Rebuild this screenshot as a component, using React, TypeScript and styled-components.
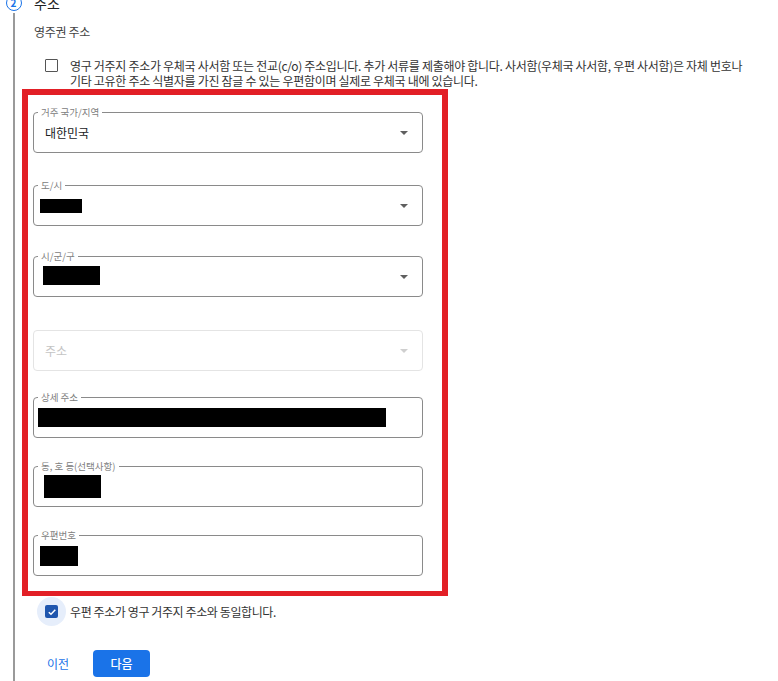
import React from 'react';
import styled, { createGlobalStyle } from 'styled-components';

const GlobalStyle = createGlobalStyle`
  html, body {
    margin: 0;
    padding: 0;
    background: #ffffff;
    overflow: hidden;
  }
  body {
    font-family: "Noto Sans CJK KR", "Noto Sans", sans-serif;
    color: #202124;
  }
`;

const Page = styled.div`
  display: flex;
  min-height: 100vh;
`;

const Rail = styled.div`
  width: 27px;
  flex: 0 0 27px;
  display: flex;
  flex-direction: column;
  align-items: center;
`;

const StepCircle = styled.div`
  width: 14px;
  height: 14px;
  margin-top: -5px;
  border: 1.5px solid #1a73e8;
  border-radius: 50%;
  display: flex;
  align-items: center;
  justify-content: center;
  color: #1a73e8;
  font-size: 10px;
  font-weight: 700;
  line-height: 1;
  background: #fff;
`;

const RailLine = styled.div`
  flex: 1;
  width: 2px;
  margin-top: 2px;
  background: #9a9a9a;
`;

const Content = styled.div`
  flex: 1;
  padding-left: 7px;
`;

const Title = styled.div`
  margin-top: -6px;
  font-size: 14px;
  line-height: 18px;
  color: #202124;
`;

const Subtitle = styled.div`
  margin-top: 12px;
  font-size: 12px;
  line-height: 16px;
  letter-spacing: -0.3px;
  color: #444;
`;

const NoticeRow = styled.label`
  display: flex;
  align-items: flex-start;
  margin-top: 18px;
  padding-left: 11px;
`;

const EmptyBox = styled.span`
  flex: 0 0 auto;
  width: 11px;
  height: 11px;
  margin-top: 1px;
  border: 1.5px solid #555;
  border-radius: 1px;
`;

const NoticeText = styled.span`
  display: flex;
  flex-direction: column;
  margin-left: 12px;
`;

const NoticeLine = styled.span`
  display: block;
  font-size: 12px;
  line-height: 15px;
  letter-spacing: -0.3px;
  color: #333;
  white-space: nowrap;
`;

const Highlight = styled.div`
  box-sizing: border-box;
  width: 426px;
  margin-top: 1px;
  margin-left: -12px;
  border: 6px solid #e21f26;
  border-bottom-width: 5px;
  padding: 17px 0 15px 5px;
`;

const Field = styled.div<{ $top: number; $disabled?: boolean }>`
  position: relative;
  box-sizing: border-box;
  width: 390px;
  height: 41px;
  margin-top: ${({ $top }) => $top}px;
  border: 1px solid ${({ $disabled }) => ($disabled ? '#e4e4e4' : '#8a8a8a')};
  border-radius: 4px;
  display: flex;
  align-items: center;
  padding: 0 12px 0 0;
`;

const FloatLabel = styled.span`
  position: absolute;
  top: -7px;
  left: 4px;
  padding: 0 3px;
  background: #fff;
  font-size: 9.5px;
  line-height: 12px;
  color: #808080;
`;

const Value = styled.span<{ $muted?: boolean }>`
  padding-left: 11px;
  font-size: 12px;
  color: ${({ $muted }) => ($muted ? '#c4c4c4' : '#202124')};
  flex: 1;
`;

const Redacted = styled.span<{ $left: number; $w: number; $h: number; $dy?: number }>`
  display: block;
  margin-left: ${({ $left }) => $left}px;
  width: ${({ $w }) => $w}px;
  height: ${({ $h }) => $h}px;
  margin-top: ${({ $dy }) => ($dy ?? 0) * 2}px;
  background: #000;
`;

const Spacer = styled.span`
  flex: 1;
`;

const Caret = styled.span<{ $muted?: boolean }>`
  width: 0;
  height: 0;
  border-left: 4px solid transparent;
  border-right: 4px solid transparent;
  border-top: 4px solid ${({ $muted }) => ($muted ? '#cfcfcf' : '#5f5f5f')};
  margin-right: 2px;
`;

const SameRow = styled.label`
  display: flex;
  align-items: center;
  margin-top: 1px;
  margin-left: 3px;
`;

const Halo = styled.span`
  width: 29px;
  height: 29px;
  border-radius: 50%;
  background: #e6eefb;
  display: flex;
  align-items: center;
  justify-content: center;
`;

const CheckedBox = styled.span`
  width: 13px;
  height: 13px;
  border-radius: 2px;
  background: #1f56ae;
  display: flex;
  align-items: center;
  justify-content: center;
`;

const SameText = styled.span`
  margin-left: 4px;
  font-size: 12px;
  letter-spacing: -0.4px;
  color: #333;
`;

const Actions = styled.div`
  display: flex;
  align-items: center;
  gap: 11px;
  margin-top: 24px;
`;

const TextButton = styled.button`
  border: 0;
  background: transparent;
  padding: 0 13px;
  height: 27px;
  font-family: inherit;
  font-size: 12px;
  color: #1a73e8;
  cursor: pointer;
`;

const PrimaryButton = styled.button`
  border: 0;
  border-radius: 4px;
  background: #1a73e8;
  width: 57px;
  height: 27px;
  padding: 0;
  font-family: inherit;
  font-size: 12px;
  font-weight: 500;
  color: #fff;
  cursor: pointer;
`;

type FieldDef = {
  label?: string;
  top: number;
  value?: string;
  placeholder?: string;
  redact?: { left: number; w: number; h: number; dy?: number };
  select?: boolean;
  disabled?: boolean;
};

const fields: FieldDef[] = [
  { label: '거주 국가/지역', top: 0, value: '대한민국', select: true },
  { label: '도/시', top: 32, redact: { left: 6, w: 42, h: 14 }, select: true },
  { label: '시/군/구', top: 30, redact: { left: 9, w: 57, h: 19, dy: -1.5 }, select: true },
  { top: 33, placeholder: '주소', select: true, disabled: true },
  { label: '상세 주소', top: 26, redact: { left: 4, w: 348, h: 19, dy: -0.5 } },
  { label: '동, 호 등(선택사항)', top: 28, redact: { left: 10, w: 57, h: 23, dy: -0.5 } },
  { label: '우편번호', top: 28, redact: { left: 6, w: 38, h: 20 } },
];

const App: React.FC = () => {
  return (
    <>
      <GlobalStyle />
      <Page>
        <Rail>
          <StepCircle>2</StepCircle>
          <RailLine />
        </Rail>
        <Content>
          <Title>주소</Title>
          <Subtitle>영주권 주소</Subtitle>
          <NoticeRow>
            <EmptyBox />
            <NoticeText>
              <NoticeLine>
                영구 거주지 주소가 우체국 사서함 또는 전교(c/o) 주소입니다. 추가 서류를 제출해야 합니다. 사서함(우체국 사서함, 우편 사서함)은 자체 번호나
              </NoticeLine>
              <NoticeLine>기타 고유한 주소 식별자를 가진 잠글 수 있는 우편함이며 실제로 우체국 내에 있습니다.</NoticeLine>
            </NoticeText>
          </NoticeRow>

          <Highlight>
            {fields.map((f, i) => (
              <Field key={i} $top={f.top} $disabled={f.disabled}>
                {f.label && <FloatLabel>{f.label}</FloatLabel>}
                {f.value && <Value>{f.value}</Value>}
                {f.placeholder && <Value $muted>{f.placeholder}</Value>}
                {f.redact && (
                  <>
                    <Redacted $left={f.redact.left} $w={f.redact.w} $h={f.redact.h} $dy={f.redact.dy} />
                    <Spacer />
                  </>
                )}
                {f.select && <Caret $muted={f.disabled} />}
              </Field>
            ))}
          </Highlight>

          <SameRow>
            <Halo>
              <CheckedBox>
                <svg width="10" height="10" viewBox="0 0 10 10">
                  <path d="M1.8 5.2 L4 7.3 L8.3 2.8" fill="none" stroke="#fff" strokeWidth="1.5" />
                </svg>
              </CheckedBox>
            </Halo>
            <SameText>우편 주소가 영구 거주지 주소와 동일합니다.</SameText>
          </SameRow>

          <Actions>
            <TextButton>이전</TextButton>
            <PrimaryButton>다음</PrimaryButton>
          </Actions>
        </Content>
      </Page>
    </>
  );
};

export default App;
